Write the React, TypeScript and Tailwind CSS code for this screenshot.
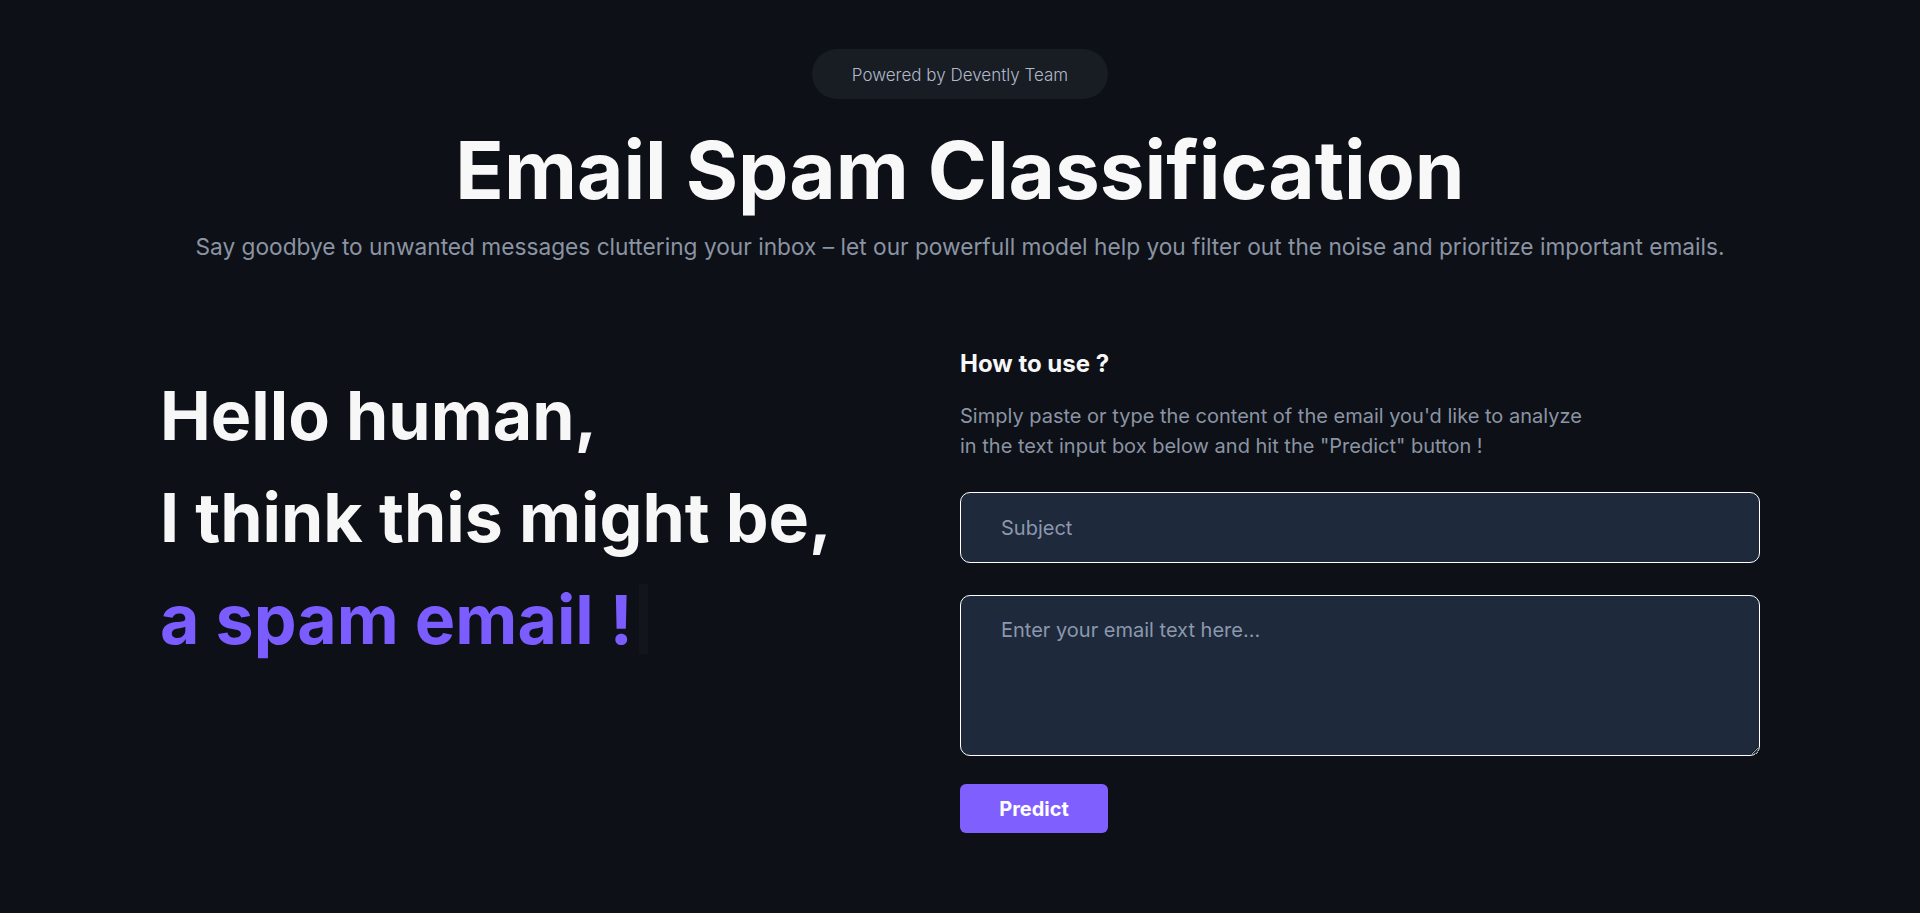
import React from "react";

export default function App() {
  return (
    <div
      className="min-h-screen w-full bg-[#0d1017] text-white"
      style={{ fontFamily: "Inter, 'Noto Sans', sans-serif" }}
    >
      <div className="flex flex-col items-center pt-[49px]">
        <div className="flex h-[50px] items-center rounded-full bg-[#181c23] px-10 pt-[3px] text-[17px] font-light text-[#b0b9ca]">
          Powered by Devently Team
        </div>
        <h1 className="mt-[31px] text-[80px] font-bold leading-[80px] text-[#f8f8f8]">
          Email Spam Classification
        </h1>
        <p className="mt-[23px] text-[22.7px] leading-7 text-[#8b94a3]">
          Say goodbye to unwanted messages cluttering your inbox – let our powerfull model help you filter out the noise and prioritize important emails.
        </p>
      </div>

      <div className="mx-auto mt-[87px] grid w-[1600px] grid-cols-2">
        <div className="pt-[16px]">
          <div className="text-[68px] font-bold leading-[102px] text-[#f7f7f7]">
            <div>Hello human,</div>
            <div>I think this might be,</div>
            <div className="flex items-center">
              <span className="text-[#7b5cff]">a spam email !</span>
              <span className="ml-[6px] h-[70px] w-[9px] bg-[#12151c]"></span>
            </div>
          </div>
        </div>

        <div className="flex flex-col">
          <h2 className="text-[24px] font-bold leading-8 text-[#f7f7f7]">How to use ?</h2>
          <p className="mt-[21px] text-[20px] leading-[30px] text-[#8b94a3]">
            Simply paste or type the content of the email you'd like to analyze
            <br />
            in the text input box below and hit the "Predict" button !
          </p>
          <input
            type="text"
            placeholder="Subject"
            className="mt-[31px] h-[71px] w-[800px] rounded-[10px] border border-white bg-[#1e293b] px-10 text-[20px] text-white placeholder:text-[#8b98ad] outline-none"
          />
          <textarea
            placeholder="Enter your email text here..."
            className="mt-8 h-[161px] w-[800px] rounded-[10px] border border-white bg-[#1e293b] px-10 py-5 text-[20px] leading-7 text-white placeholder:text-[#8b98ad] outline-none"
          />
          <div className="mt-[28px]">
            <button className="flex h-[49px] w-[148px] items-center justify-center rounded-md bg-[#7f60ff] text-[20px] font-bold text-white">
              Predict
            </button>
          </div>
        </div>
      </div>
    </div>
  );
}
